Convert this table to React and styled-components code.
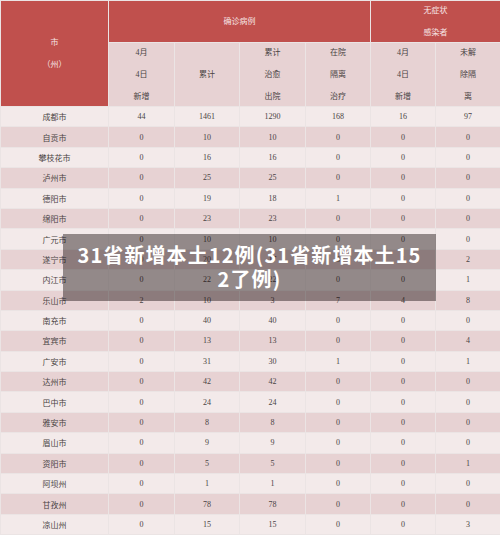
import React from 'react'
import styled, { createGlobalStyle } from 'styled-components'

const GlobalStyle = createGlobalStyle`
  html, body {
    margin: 0;
    padding: 0;
    background: #ffffff;
    overflow: hidden;
  }
`

const Page = styled.div`
  position: relative;
  width: 500px;
  height: 535px;
  overflow: hidden;
  font-family: 'Liberation Serif', 'Noto Sans CJK SC', serif;
`

const Table = styled.table`
  width: 500px;
  table-layout: fixed;
  border-collapse: collapse;
  font-size: 8px;
  color: #4a4444;
  text-align: center;
`

const Col = styled.col`
  width: ${(p) => p.$w}px;
`

const HeadCell = styled.th`
  font-weight: normal;
  padding: 0;
  border: 1px solid #ebe4e4;
  background: ${(p) => (p.$dark ? '#c0504d' : '#e7d2d3')};
  color: ${(p) => (p.$dark ? '#f6e4e4' : '#4a4444')};
  vertical-align: middle;
`

// fixed-height box so the 22px lines don't stretch the header rows
const Stack = styled.div`
  height: ${(p) => p.$h}px;
  display: flex;
  flex-direction: column;
  justify-content: center;
  align-items: center;
`

const Line = styled.span`
  display: block;
  height: 22px;
  line-height: 22px;
  flex-shrink: 0;
`

const Row = styled.tr`
  height: 20.4px;
  background: ${(p) => (p.$alt ? '#e7d2d3' : '#f3eaea')};
`

const Cell = styled.td`
  padding: 0;
  border: 1px solid #ebe4e4;
  vertical-align: middle;
`

const Banner = styled.div`
  position: absolute;
  left: 63px;
  top: 234px;
  width: 373px;
  box-sizing: border-box;
  padding: 9px 12px 10px;
  background: rgba(20, 10, 10, 0.43);
  color: #ffffff;
  font-family: 'Noto Sans CJK SC', 'Noto Sans', sans-serif;
  font-weight: 700;
  font-size: 20px;
  line-height: 24px;
  letter-spacing: 1.1px;
  text-align: center;
  word-break: break-all;
`

const widths = [108, 66, 65, 66, 65, 65, 65]

const rows = [
  ['成都市', 44, 1461, 1290, 168, 16, 97],
  ['自贡市', 0, 10, 10, 0, 0, 0],
  ['攀枝花市', 0, 16, 16, 0, 0, 0],
  ['泸州市', 0, 25, 25, 0, 0, 0],
  ['德阳市', 0, 19, 18, 1, 0, 0],
  ['绵阳市', 0, 23, 23, 0, 0, 0],
  ['广元市', 0, 10, 10, 0, 0, 0],
  ['遂宁市', 0, 20, 17, 3, 1, 2],
  ['内江市', 0, 22, 22, 0, 0, 1],
  ['乐山市', 2, 10, 3, 7, 4, 8],
  ['南充市', 0, 40, 40, 0, 0, 0],
  ['宜宾市', 0, 13, 13, 0, 0, 4],
  ['广安市', 0, 31, 30, 1, 0, 1],
  ['达州市', 0, 42, 42, 0, 0, 0],
  ['巴中市', 0, 24, 24, 0, 0, 0],
  ['雅安市', 0, 8, 8, 0, 0, 0],
  ['眉山市', 0, 9, 9, 0, 0, 0],
  ['资阳市', 0, 5, 5, 0, 0, 1],
  ['阿坝州', 0, 1, 1, 0, 0, 0],
  ['甘孜州', 0, 78, 78, 0, 0, 0],
  ['凉山州', 0, 15, 15, 0, 0, 3],
]

const subHeads = [
  ['4月', '4日', '新增'],
  ['累计'],
  ['累计', '治愈', '出院'],
  ['在院', '隔离', '治疗'],
  ['4月', '4日', '新增'],
  ['未解', '除隔', '离'],
]

const Lines = ({ lines, h }) => (
  <Stack $h={h}>
    {lines.map((l, i) => (
      <Line key={i}>{l}</Line>
    ))}
  </Stack>
)

export default function App() {
  return (
    <Page>
      <GlobalStyle />
      <Table>
        <colgroup>
          {widths.map((w, i) => (
            <Col key={i} $w={w} />
          ))}
        </colgroup>
        <thead>
          <tr>
            <HeadCell $dark rowSpan={2}>
              <Lines lines={['市', '（州）']} h={105} />
            </HeadCell>
            <HeadCell $dark colSpan={4}>
              <Lines lines={['确诊病例']} h={41} />
            </HeadCell>
            <HeadCell $dark colSpan={2}>
              <Lines lines={['无症状', '感染者']} h={41} />
            </HeadCell>
          </tr>
          <tr>
            {subHeads.map((s, i) => (
              <HeadCell key={i}>
                <Lines lines={s} h={63} />
              </HeadCell>
            ))}
          </tr>
        </thead>
        <tbody>
          {rows.map((r, i) => (
            <Row key={r[0]} $alt={i % 2 === 1}>
              {r.map((v, j) => (
                <Cell key={j}>{v}</Cell>
              ))}
            </Row>
          ))}
        </tbody>
      </Table>
      <Banner>31省新增本土12例(31省新增本土152了例)</Banner>
    </Page>
  )
}
